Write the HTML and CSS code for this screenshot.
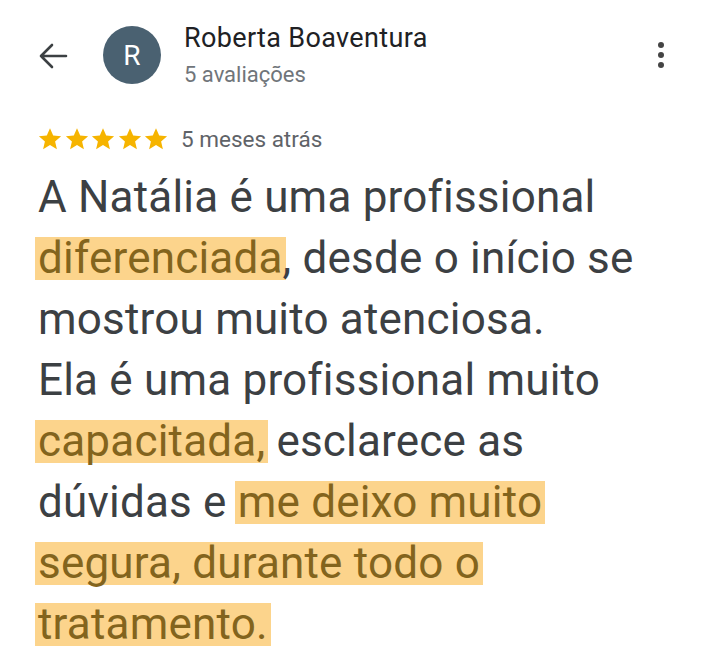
FILE: index.html
```html
<!DOCTYPE html>
<html lang="pt">
<head>
<meta charset="utf-8">
<link rel="stylesheet" href="styles.css">
</head>
<body>
<div class="review">
  <header class="top">
    <svg class="back" viewBox="0 0 30 26" width="30" height="26"><path d="M28 13H3M14 2L3 13l11 11" fill="none" stroke="#3c4043" stroke-width="2.6" stroke-linecap="round" stroke-linejoin="round"/></svg>
    <div class="avatar">R</div>
    <div class="who">
      <div class="name">Roberta Boaventura</div>
      <div class="count">5 avaliações</div>
    </div>
    <div class="more"><span></span><span></span><span></span></div>
  </header>
  <div class="meta">
    <div class="stars">
      <svg viewBox="0 0 24 24" width="24" height="24"><path d="M12 1.2l3.2 7.3 7.9.7-6 5.2 1.8 7.8L12 18.1l-6.9 4.1 1.8-7.8-6-5.2 7.9-.7z"/></svg>
      <svg viewBox="0 0 24 24" width="24" height="24"><path d="M12 1.2l3.2 7.3 7.9.7-6 5.2 1.8 7.8L12 18.1l-6.9 4.1 1.8-7.8-6-5.2 7.9-.7z"/></svg>
      <svg viewBox="0 0 24 24" width="24" height="24"><path d="M12 1.2l3.2 7.3 7.9.7-6 5.2 1.8 7.8L12 18.1l-6.9 4.1 1.8-7.8-6-5.2 7.9-.7z"/></svg>
      <svg viewBox="0 0 24 24" width="24" height="24"><path d="M12 1.2l3.2 7.3 7.9.7-6 5.2 1.8 7.8L12 18.1l-6.9 4.1 1.8-7.8-6-5.2 7.9-.7z"/></svg>
      <svg viewBox="0 0 24 24" width="24" height="24"><path d="M12 1.2l3.2 7.3 7.9.7-6 5.2 1.8 7.8L12 18.1l-6.9 4.1 1.8-7.8-6-5.2 7.9-.7z"/></svg>
    </div>
    <span class="when">5 meses atrás</span>
  </div>
  <p class="text">A Natália é uma profissional <mark>diferenciada</mark>, desde o início se mostrou muito atenciosa.<br>Ela é uma profissional muito <mark>capacitada,</mark> esclarece as dúvidas e <mark>me deixo muito segura, durante todo o tratamento.</mark></p>
</div>
</body>
</html>
```
FILE: styles.css
```css
html, body {
  margin: 0;
  background: #fff;
}
body {
  width: 720px;
  height: 671px;
  overflow: hidden;
  font-family: Roboto, "Noto Sans", sans-serif;
}
.review {
  padding: 0 38px;
}
.top {
  display: flex;
  align-items: center;
  padding-top: 26px;
  height: 58px;
}
.back {
  flex: none;
  margin-top: 1px;
}
.avatar {
  flex: none;
  width: 58px;
  height: 58px;
  border-radius: 50%;
  background: #4a6171;
  color: #fff;
  font-size: 28px;
  display: flex;
  align-items: center;
  justify-content: center;
  margin-left: 35px;
}
.who {
  flex: 1;
  margin-left: 23px;
}
.name {
  font-size: 27px;
  color: #202124;
  line-height: 32px;
  letter-spacing: 0.35px;
}
.count {
  font-size: 22px;
  color: #70757a;
  line-height: 26px;
  margin-top: 8px;
}
.more {
  display: flex;
  flex-direction: column;
  gap: 3.5px;
  margin-right: 18px;
}
.more span {
  width: 6.5px;
  height: 6.5px;
  border-radius: 50%;
  background: #444;
}
.meta {
  display: flex;
  align-items: center;
  margin-top: 42px;
  height: 26px;
}
.stars {
  display: flex;
  gap: 2.5px;
  fill: #f6b400;
}
.when {
  margin-left: 13px;
  font-size: 22.5px;
  color: #5f6368;
}
.text {
  margin: 15px 0 0;
  font-size: 44px;
  line-height: 61px;
  color: #3c4043;
  letter-spacing: 0.2px;
  width: 640px;
}
mark {
  background: linear-gradient(transparent 9%, #fcd48c 9%, #fcd48c 93%, transparent 93%);
  color: #83641d;
  padding: 0 3px;
  margin: 0 -3px;
  -webkit-box-decoration-break: clone;
  box-decoration-break: clone;
}
```
